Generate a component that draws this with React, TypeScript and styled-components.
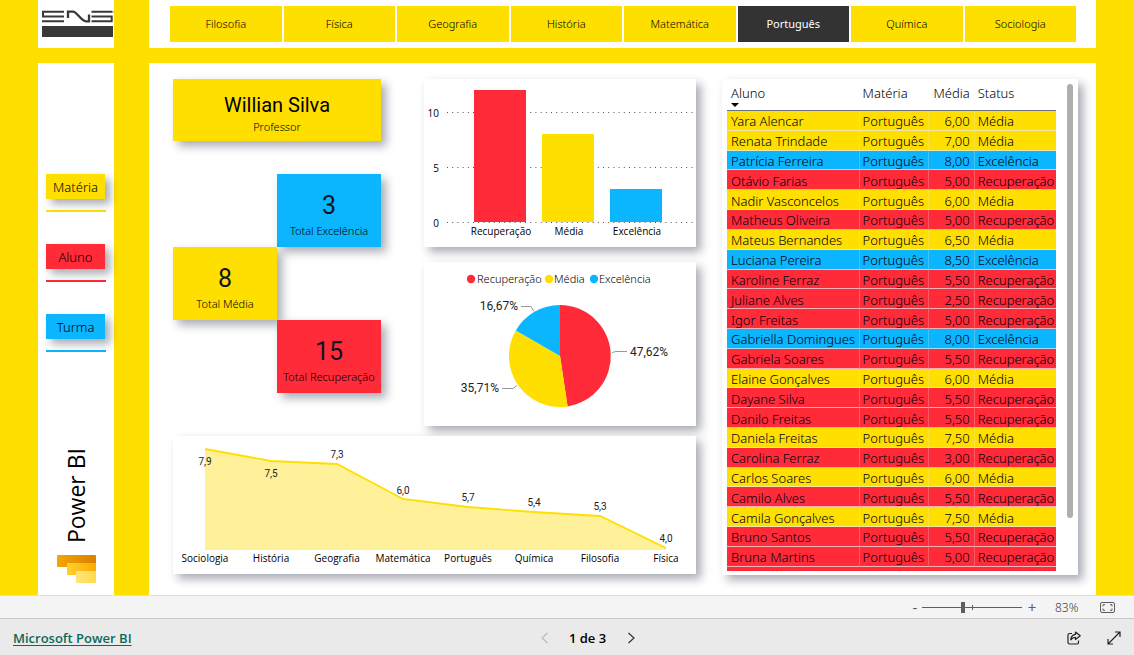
import React from 'react';
import styled, { createGlobalStyle, css } from 'styled-components';

type Tone = 'yellow' | 'red' | 'blue';

const tones: Record<Tone, string> = {
  yellow: '#ffdf00',
  red: '#ff2b39',
  blue: '#0bb6ff',
};

const sans = "'Noto Sans', 'Segoe UI', sans-serif";
const wide = "'Open Sans', 'Segoe UI', sans-serif";
const din = "Roboto, 'DIN', sans-serif";

const GlobalStyle = createGlobalStyle`
  *, *::before, *::after { box-sizing: border-box; }
  body { margin: 0; font-family: ${sans}; color: #000; }
  button { font: inherit; color: inherit; border: 0; padding: 0; background: none; cursor: pointer; }
`;

const raised = css`
  box-shadow: 5px 5px 9px rgba(20, 26, 48, 0.36);
`;

/* ---------- page frame ---------- */

const Page = styled.div`
  display: flex;
  flex-direction: column;
  min-height: 100vh;
  background: ${tones.yellow};
`;

const Report = styled.div`
  flex: 1;
  display: grid;
  grid-template-columns: 76px minmax(0, 1fr);
  grid-template-rows: 48px 1fr;
  gap: 15px 35px;
  padding: 0 38px;
`;

const LogoBox = styled.div`
  background: #fff;
  svg { display: block; }
`;

const Tabs = styled.nav`
  display: grid;
  grid-template-columns: repeat(8, 1fr);
  gap: 2px;
  padding: 6px 20px 6px 21px;
  background: #fff;
`;

const Tab = styled.button<{ $active?: boolean }>`
  padding-bottom: 1px;
  font-size: 11px;
  font-weight: ${p => (p.$active ? 400 : 300)};
  color: ${p => (p.$active ? '#fff' : '#000')};
  background: ${p => (p.$active ? '#333' : tones.yellow)};
`;

/* ---------- sidebar ---------- */

const Sidebar = styled.aside`
  display: flex;
  flex-direction: column;
  align-items: center;
  padding: 111px 8px 12px;
  background: #fff;
`;

const Slicers = styled.div`
  display: flex;
  flex-direction: column;
  gap: 32px;
  width: 60px;
`;

const Slicer = styled.div<{ $tone: Tone }>`
  padding-bottom: 11px;
  border-bottom: 2px solid ${p => tones[p.$tone]};
`;

const SlicerButton = styled.button<{ $tone: Tone }>`
  display: block;
  width: 59px;
  height: 25px;
  font-size: 13px;
  font-weight: 300;
  background: ${p => tones[p.$tone]};
  ${raised}
`;

const Brand = styled.div`
  display: flex;
  flex-direction: column;
  align-items: center;
  gap: 12px;
  margin-top: auto;
  svg { display: block; }
`;

const BrandName = styled.span`
  writing-mode: vertical-rl;
  transform: rotate(180deg);
  font-family: ${wide};
  font-size: 23px;
  line-height: 30px;
`;

/* ---------- dashboard ---------- */

const Dashboard = styled.main`
  display: grid;
  grid-template-columns: minmax(0, 523fr) minmax(0, 356fr);
  gap: 26px;
  align-items: start;
  padding: 16px 18px 20px 24px;
  background: #fff;
`;

const Visuals = styled.div`
  display: grid;
  grid-template-columns: minmax(0, 208fr) minmax(0, 272fr);
  gap: 10px 43px;
`;

const Summary = styled.div`
  display: flex;
  flex-direction: column;
  gap: 33px;
`;

const Charts = styled.div`
  display: flex;
  flex-direction: column;
  gap: 15px;
`;

const Panel = styled.figure<{ $wide?: boolean }>`
  margin: 0;
  grid-column: ${p => (p.$wide ? '1 / -1' : 'auto')};
  background: #fff;
  ${raised}
  svg { display: block; width: 100%; height: auto; }
`;

const TeacherCard = styled.section`
  display: flex;
  flex-direction: column;
  align-items: center;
  padding: 13px 0 5px;
  background: ${tones.yellow};
  ${raised}
`;

const TeacherName = styled.h1`
  margin: 0;
  font: 400 20px/26px ${din};
`;

const CardLabel = styled.span`
  font-size: 11px;
  font-weight: 300;
  line-height: 18px;
`;

const Totals = styled.div`
  display: grid;
  grid-template-columns: 1fr 1fr;
`;

const TotalCard = styled.section<{ $tone: Tone; $side: number; $row: number }>`
  grid-column: ${p => p.$side};
  grid-row: ${p => p.$row};
  display: flex;
  flex-direction: column;
  align-items: center;
  padding: 16px 0 7px;
  white-space: nowrap;
  background: ${p => tones[p.$tone]};
  ${raised}
`;

const TotalValue = styled.strong`
  font: 400 25px/32px ${din};
  color: #101423;
`;

/* ---------- chart text ---------- */

const ChartText = styled.text<{ $anchor?: string; $size?: number }>`
  font-family: ${wide};
  font-weight: ${p => (p.$size ? 300 : 400)};
  font-size: ${p => p.$size ?? 10}px;
  text-anchor: ${p => p.$anchor ?? 'middle'};
  fill: #000;
`;

const LegendText = styled(ChartText)`
  font-family: ${sans};
`;

const ValueText = styled(ChartText)`
  font-family: ${din};
  font-weight: 400;
  fill: #222;
`;

/* ---------- grades table ---------- */

const TablePanel = styled.section`
  display: flex;
  justify-content: space-between;
  height: 496px;
  padding: 0 5px 4px;
  background: #fff;
  ${raised}
`;

const TableArea = styled.div`
  flex: 1;
  min-width: 0;
  overflow: hidden;
`;

const ScrollTrack = styled.div`
  width: 17px;
  padding: 5px 0 0 11px;
`;

const ScrollThumb = styled.div`
  width: 6px;
  height: 434px;
  border-radius: 3px;
  background: #b0aead;
`;

const Table = styled.table`
  width: 100%;
  height: 492px;
  table-layout: fixed;
  border-spacing: 0;
  font-size: 13px;
  font-weight: 300;
  white-space: nowrap;
`;

const Col = styled.col<{ $share: number }>`
  width: ${p => p.$share}%;
`;

const HeadRow = styled.tr`
  height: 32px;
`;

const Th = styled.th<{ $right?: boolean }>`
  padding: 5px 4px 0;
  border-bottom: 1px solid #6d7480;
  font-weight: inherit;
  line-height: 18px;
  vertical-align: top;
  text-align: ${p => (p.$right ? 'right' : 'left')};
`;

const SortButton = styled.button`
  display: flex;
  flex-direction: column;
  align-items: flex-start;
  line-height: 18px;
  &::after {
    content: '';
    margin-top: 1px;
    border: 4px solid transparent;
    border-top-color: #000;
    border-bottom: 0;
  }
`;

const Row = styled.tr<{ $tone: Tone }>`
  background: ${p => tones[p.$tone]};
`;

const Td = styled.td<{ $right?: boolean }>`
  padding: 2px 4px 0;
  line-height: 16px;
  color: #00000f;
  border-bottom: 1px solid rgba(235, 235, 235, 0.7);
  text-align: ${p => (p.$right ? 'right' : 'left')};
  & + & { border-left: 1px solid rgba(235, 235, 235, 0.25); padding-left: 3px; }
`;

const CutRow = styled.tr`
  height: 4px;
  background: ${tones.red};
  td { padding: 0; }
`;

/* ---------- bottom bars ---------- */

const ZoomBar = styled.div`
  display: flex;
  justify-content: flex-end;
  align-items: center;
  height: 24px;
  padding-right: 19px;
  background: #f4f4f4;
  border-top: 1px solid #e0e0e0;
  border-bottom: 1px solid #c8c8c8;
  color: #605e5c;
  font-size: 12px;
  svg { display: block; }
`;

const ZoomStep = styled.button`
  width: 14px;
  font-size: 15px;
  line-height: 20px;
`;

const ZoomSlider = styled.input`
  appearance: none;
  width: 100px;
  height: 11px;
  margin: 0 3px 0 0;
  background:
    linear-gradient(#605e5c, #605e5c) 50px 3px / 1px 5px no-repeat,
    linear-gradient(#605e5c, #605e5c) 0 5px / 100% 1px no-repeat;
  &::-webkit-slider-thumb {
    appearance: none;
    width: 4px;
    height: 11px;
    background: #605e5c;
  }
`;

const ZoomValue = styled.output`
  width: 24px;
  margin: 0 21px 0 16px;
  font-weight: 300;
  color: #444;
`;

const Footer = styled.footer`
  display: grid;
  grid-template-columns: 1fr auto 1fr;
  align-items: center;
  height: 36px;
  padding: 2px 13px 0;
  background: #eaeaea;
  font: 600 13px/18px ${wide};
  svg { display: block; }
`;

const FooterLink = styled.a`
  justify-self: start;
  color: #0c695a;
  text-underline-offset: 2px;
`;

const Pager = styled.div`
  display: flex;
  align-items: center;
  gap: 17px;
  padding-left: 41px;
`;

const PageCount = styled.span`
  min-width: 38px;
  text-align: center;
`;

const Actions = styled.div`
  display: flex;
  justify-self: end;
  gap: 26px;
`;

/* ---------- data ---------- */

const subjects = ['Filosofia', 'Física', 'Geografia', 'História', 'Matemática', 'Português', 'Química', 'Sociologia'];

const slicers: { label: string; tone: Tone }[] = [
  { label: 'Matéria', tone: 'yellow' },
  { label: 'Aluno', tone: 'red' },
  { label: 'Turma', tone: 'blue' },
];

const totals: { value: number; label: string; tone: Tone; side: number }[] = [
  { value: 3, label: 'Total Excelência', tone: 'blue', side: 2 },
  { value: 8, label: 'Total Média', tone: 'yellow', side: 1 },
  { value: 15, label: 'Total Recuperação', tone: 'red', side: 2 },
];

const grades: [string, string][] = [
  ['Yara Alencar', '6,00'],
  ['Renata Trindade', '7,00'],
  ['Patrícia Ferreira', '8,00'],
  ['Otávio Farias', '5,00'],
  ['Nadir Vasconcelos', '6,00'],
  ['Matheus Oliveira', '5,00'],
  ['Mateus Bernandes', '6,50'],
  ['Luciana Pereira', '8,50'],
  ['Karoline Ferraz', '5,50'],
  ['Juliane Alves', '2,50'],
  ['Igor Freitas', '5,00'],
  ['Gabriella Domingues', '8,00'],
  ['Gabriela Soares', '5,50'],
  ['Elaine Gonçalves', '6,00'],
  ['Dayane Silva', '5,50'],
  ['Danilo Freitas', '5,50'],
  ['Daniela Freitas', '7,50'],
  ['Carolina Ferraz', '3,00'],
  ['Carlos Soares', '6,00'],
  ['Camilo Alves', '5,50'],
  ['Camila Gonçalves', '7,50'],
  ['Bruno Santos', '5,50'],
  ['Bruna Martins', '5,00'],
];

function statusOf(grade: string): { status: string; tone: Tone } {
  const n = parseFloat(grade.replace(',', '.'));
  if (n >= 8) return { status: 'Excelência', tone: 'blue' };
  if (n >= 6) return { status: 'Média', tone: 'yellow' };
  return { status: 'Recuperação', tone: 'red' };
}

const bars: { label: string; value: number; tone: Tone; x: number }[] = [
  { label: 'Recuperação', value: 12, tone: 'red', x: 50 },
  { label: 'Média', value: 8, tone: 'yellow', x: 118 },
  { label: 'Excelência', value: 3, tone: 'blue', x: 186 },
];

const averages = [
  { label: 'Sociologia', value: '7,9', x: 32, y: 13, ty: 29 },
  { label: 'História', value: '7,5', x: 98, y: 25, ty: 41 },
  { label: 'Geografia', value: '7,3', x: 164, y: 28, ty: 22 },
  { label: 'Matemática', value: '6,0', x: 230, y: 63, ty: 58 },
  { label: 'Português', value: '5,7', x: 295, y: 71, ty: 65 },
  { label: 'Química', value: '5,4', x: 361, y: 76, ty: 70 },
  { label: 'Filosofia', value: '5,3', x: 427, y: 80, ty: 74 },
  { label: 'Física', value: '4,0', x: 493, y: 112, ty: 106 },
];

/* ---------- drawings ---------- */

const EnsLogo = () => (
  <svg width="76" height="48" viewBox="0 0 76 48" role="img" aria-label="ENS">
    <g fill="none" stroke="#383839" strokeWidth="2">
      <path d="M26 11.7H5V16.5H26M26 21.3H4" />
      <path d="M30 18V11.7H35C39 11.7 43 21.3 48 21.3H51V14.5" strokeWidth="2.3" />
      <path d="M53.5 11.7H74.5M53.5 16.5H73.7V21.3H53.5" />
    </g>
    <rect x="4" y="26" width="71" height="11" fill="#383839" />
    <circle cx="75.5" cy="12" r="0.7" fill="#999" />
  </svg>
);

const PowerBiMark = () => (
  <svg width="39" height="28" viewBox="0 0 39 28" aria-hidden="true">
    <defs>
      <linearGradient id="pbDark"><stop offset="0" stopColor="#f3a600" /><stop offset="1" stopColor="#db7f00" /></linearGradient>
      <linearGradient id="pbMid"><stop offset="0" stopColor="#ffd02e" /><stop offset="1" stopColor="#f9ab00" /></linearGradient>
      <linearGradient id="pbLight"><stop offset="0" stopColor="#ffe57d" /><stop offset="1" stopColor="#ffd94a" /></linearGradient>
    </defs>
    <rect width="39" height="12" rx="1" fill="url(#pbDark)" />
    <path d="M10 8H39V20H11Q10 20 10 19Z" fill="url(#pbMid)" />
    <path d="M19 16H39V27Q39 28 38 28H20Q19 28 19 27Z" fill="url(#pbLight)" />
  </svg>
);

const BarChart = () => (
  <svg viewBox="0 0 272 168" role="img" aria-label="Alunos por status">
    {[10, 5, 0].map(v => {
      const y = 143.5 - v * 11;
      return (
        <g key={v}>
          <line x1="23" x2="269" y1={y} y2={y} stroke="#555" strokeDasharray="1 4.2" />
          <ChartText x="15" y={y + 4} $anchor="end">{v}</ChartText>
        </g>
      );
    })}
    {bars.map(b => (
      <g key={b.label}>
        <rect x={b.x} y={143 - b.value * 11} width="52" height={b.value * 11} fill={tones[b.tone]} />
        <ChartText x={b.x + 27} y="156">{b.label}</ChartText>
      </g>
    ))}
  </svg>
);

const PieChart = () => (
  <svg viewBox="0 0 272 164" role="img" aria-label="Percentual por status">
    <circle cx="47" cy="17" r="4.2" fill={tones.red} />
    <LegendText x="53" y="21" $anchor="start" $size={11}>Recuperação</LegendText>
    <circle cx="125" cy="17" r="4.2" fill={tones.yellow} />
    <LegendText x="130" y="21" $anchor="start" $size={11}>Média</LegendText>
    <circle cx="170" cy="17" r="4.2" fill={tones.blue} />
    <LegendText x="175" y="21" $anchor="start" $size={11}>Excelência</LegendText>
    <path d="M136 94V43A51 51 0 0 1 143.6 144.4Z" fill={tones.red} />
    <path d="M136 94L143.6 144.4A51 51 0 0 1 91.8 68.5Z" fill={tones.yellow} />
    <path d="M136 94L91.8 68.5A51 51 0 0 1 136 43Z" fill={tones.blue} />
    <path d="M188 90.5L192 89.5H203M97 44.5H107L110 49.5M78 126.5H89L93 123.5" fill="none" stroke="#999" />
    <ValueText x="206" y="94" $anchor="start" $size={12}>47,62%</ValueText>
    <ValueText x="94" y="48" $anchor="end" $size={12}>16,67%</ValueText>
    <ValueText x="75" y="130" $anchor="end" $size={12}>35,71%</ValueText>
  </svg>
);

const AreaChart = () => {
  const line = averages.map(a => `${a.x},${a.y}`).join(' ');
  return (
    <svg viewBox="0 0 523 138" role="img" aria-label="Média por matéria">
      <polygon points={`32,114 ${line} 493,114`} fill="#fff09a" />
      <polyline points={line} fill="none" stroke={tones.yellow} strokeWidth="1.8" />
      {averages.map(a => (
        <g key={a.label}>
          <ValueText x={a.x} y={a.ty}>{a.value}</ValueText>
          <ChartText x={a.x} y="126">{a.label}</ChartText>
        </g>
      ))}
    </svg>
  );
};

const Chevron = ({ left }: { left?: boolean }) => (
  <svg width="14" height="14" viewBox="0 0 14 14" fill="none" stroke={left ? '#bbb' : '#333'} strokeWidth="1.2">
    <path d={left ? 'M9.5 2L4 7L9.5 12' : 'M4.5 2L10 7L4.5 12'} />
  </svg>
);

const FitIcon = () => (
  <svg width="15" height="11" viewBox="0 0 15 11" fill="none" stroke="#605e5c">
    <rect x="0.5" y="0.5" width="14" height="10" rx="1.5" />
    <path d="M5 2.7H3V4.5M10 2.7H12V4.5M5 8.3H3V6.5M10 8.3H12V6.5" />
  </svg>
);

const ShareIcon = () => (
  <svg width="14" height="14" viewBox="0 0 14 14" fill="none" stroke="#222" strokeWidth="1.2" strokeLinejoin="round">
    <path d="M5 2.5H2.5Q1 2.5 1 4V11.5Q1 13 2.5 13H10Q11.5 13 11.5 11.5V9.5" />
    <path d="M8.5 1L13.2 4.8L8.5 8.5V6.3Q5.5 6.2 3.8 8.8Q4.2 3.8 8.5 3.3Z" />
  </svg>
);

const ExpandIcon = () => (
  <svg width="14" height="14" viewBox="0 0 14 14" fill="none" stroke="#222" strokeWidth="1.2">
    <path d="M1 13L13 1M8 1H13V6M1 8V13H6" />
  </svg>
);

export default function App() {
  return (
    <Page>
      <GlobalStyle />
      <Report>
        <LogoBox><EnsLogo /></LogoBox>
        <Tabs aria-label="Matérias">
          {subjects.map(s => (
            <Tab key={s} type="button" $active={s === 'Português'} aria-pressed={s === 'Português'}>{s}</Tab>
          ))}
        </Tabs>

        <Sidebar>
          <Slicers>
            {slicers.map(s => (
              <Slicer key={s.label} $tone={s.tone}>
                <SlicerButton type="button" $tone={s.tone}>{s.label}</SlicerButton>
              </Slicer>
            ))}
          </Slicers>
          <Brand>
            <BrandName>Power BI</BrandName>
            <PowerBiMark />
          </Brand>
        </Sidebar>

        <Dashboard>
          <Visuals>
            <Summary>
              <TeacherCard>
                <TeacherName>Willian Silva</TeacherName>
                <CardLabel>Professor</CardLabel>
              </TeacherCard>
              <Totals>
                {totals.map((t, i) => (
                  <TotalCard key={t.label} $tone={t.tone} $side={t.side} $row={i + 1}>
                    <TotalValue>{t.value}</TotalValue>
                    <CardLabel>{t.label}</CardLabel>
                  </TotalCard>
                ))}
              </Totals>
            </Summary>
            <Charts>
              <Panel><BarChart /></Panel>
              <Panel><PieChart /></Panel>
            </Charts>
            <Panel $wide><AreaChart /></Panel>
          </Visuals>

          <TablePanel>
            <TableArea>
              <Table>
                <colgroup>
                  <Col $share={40} />
                  <Col $share={21} />
                  <Col $share={14} />
                  <Col $share={25} />
                </colgroup>
                <thead>
                  <HeadRow>
                    <Th scope="col" aria-sort="descending"><SortButton type="button">Aluno</SortButton></Th>
                    <Th scope="col">Matéria</Th>
                    <Th scope="col" $right>Média</Th>
                    <Th scope="col">Status</Th>
                  </HeadRow>
                </thead>
                <tbody>
                  {grades.map(([name, grade]) => {
                    const { status, tone } = statusOf(grade);
                    return (
                      <Row key={name} $tone={tone}>
                        <Td>{name}</Td>
                        <Td>Português</Td>
                        <Td $right>{grade}</Td>
                        <Td>{status}</Td>
                      </Row>
                    );
                  })}
                  <CutRow aria-hidden="true"><td colSpan={4} /></CutRow>
                </tbody>
              </Table>
            </TableArea>
            <ScrollTrack><ScrollThumb /></ScrollTrack>
          </TablePanel>
        </Dashboard>
      </Report>

      <ZoomBar>
        <ZoomStep type="button" aria-label="Reduzir">-</ZoomStep>
        <ZoomSlider type="range" min="0" max="100" defaultValue="41" aria-label="Zoom" />
        <ZoomStep type="button" aria-label="Ampliar">+</ZoomStep>
        <ZoomValue>83%</ZoomValue>
        <button type="button" aria-label="Ajustar à página"><FitIcon /></button>
      </ZoomBar>

      <Footer>
        <FooterLink href="#">Microsoft Power BI</FooterLink>
        <Pager>
          <button type="button" aria-label="Página anterior" disabled><Chevron left /></button>
          <PageCount>1 de 3</PageCount>
          <button type="button" aria-label="Próxima página"><Chevron /></button>
        </Pager>
        <Actions>
          <button type="button" aria-label="Compartilhar"><ShareIcon /></button>
          <button type="button" aria-label="Tela inteira"><ExpandIcon /></button>
        </Actions>
      </Footer>
    </Page>
  );
}
